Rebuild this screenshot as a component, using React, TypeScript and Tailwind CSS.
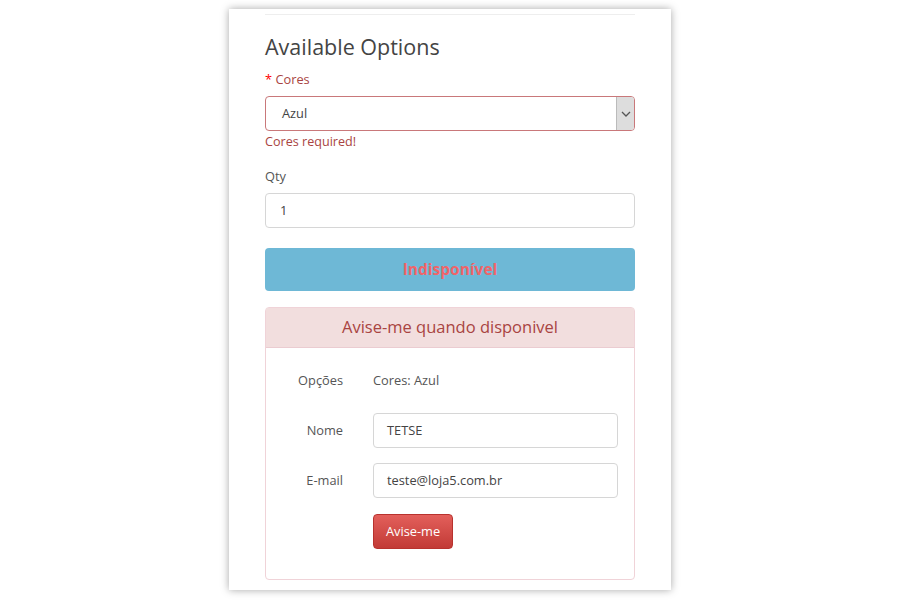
import React from "react";

export default function App() {
  return (
    <div className="w-[900px] h-[600px] bg-white flex justify-center pt-[9px]" style={{ fontFamily: '"Open Sans", sans-serif' }}>
      <div className="w-[442px] h-[581px] bg-white shadow-[0_0_8px_rgba(0,0,0,0.35)] px-[36px] flex flex-col">
        <div className="h-px bg-[#eeeeee] mt-[5px]" />
        <h2 className="text-[21.5px] text-[#444] mt-[17px] leading-[30px]">Available Options</h2>
        <div className="text-[12.8px] text-[#a94442] mt-[8px] leading-[18px]">
          <span className="text-[#ff0000]">*</span> Cores
        </div>
        <div className="mt-[8px] h-[35px] border border-[#c9787a] rounded-[4px] flex items-center overflow-hidden">
          <span className="flex-1 pl-[16px] text-[12.8px] text-[#444]">Azul</span>
          <div className="w-[18px] h-full bg-[#dddddd] border-l border-[#bbb] flex items-center justify-center">
            <svg width="10" height="6" viewBox="0 0 10 6"><path d="M1 1l4 4 4-4" fill="none" stroke="#555" strokeWidth="1.3" /></svg>
          </div>
        </div>
        <div className="text-[12.6px] text-[#a94442] mt-[2px] leading-[18px]">Cores required!</div>
        <div className="text-[12.8px] text-[#555] mt-[16px] leading-[18px]">Qty</div>
        <div className="mt-[8px] h-[35px] border border-[#d6d6d6] rounded-[4px] flex items-center pl-[14px] text-[12.8px] text-[#444]">1</div>
        <div className="mt-[20px] h-[43px] bg-[#6eb8d6] rounded-[4px] flex items-center justify-center text-[15.5px] font-bold text-[#f06468]">Indisponível</div>
        <div className="mt-[16px] h-[273px] border border-[#f0d3d8] rounded-[4px] flex flex-col">
          <div className="h-[40px] bg-[#f2dede] border-b border-[#ebccd1] flex items-center justify-center text-[16.5px] text-[#a94442]">Avise-me quando disponivel</div>
          <div className="flex flex-col pt-[23px] pr-[16px]">
            <div className="flex items-center h-[20px]">
              <div className="w-[77px] text-right text-[12.8px] text-[#555]">Opções</div>
              <div className="ml-[30px] text-[12.8px] text-[#555]">Cores: Azul</div>
            </div>
            <div className="flex items-center mt-[22px]">
              <div className="w-[77px] text-right text-[12.8px] text-[#555]">Nome</div>
              <div className="ml-[30px] flex-1 h-[35px] border border-[#d6d6d6] rounded-[4px] flex items-center pl-[13px] text-[12.8px] text-[#444]">TETSE</div>
            </div>
            <div className="flex items-center mt-[15px]">
              <div className="w-[77px] text-right text-[12.8px] text-[#555]">E-mail</div>
              <div className="ml-[30px] flex-1 h-[35px] border border-[#d6d6d6] rounded-[4px] flex items-center pl-[13px] text-[12.8px] text-[#444]">teste@loja5.com.br</div>
            </div>
            <div className="flex mt-[16px] ml-[107px]">
              <div className="w-[80px] h-[35px] rounded-[4px] bg-gradient-to-b from-[#e35f5b] to-[#c23a36] border border-[#b8322e] flex items-center justify-center text-[12.8px] text-white">Avise-me</div>
            </div>
          </div>
        </div>
      </div>
    </div>
  );
}
